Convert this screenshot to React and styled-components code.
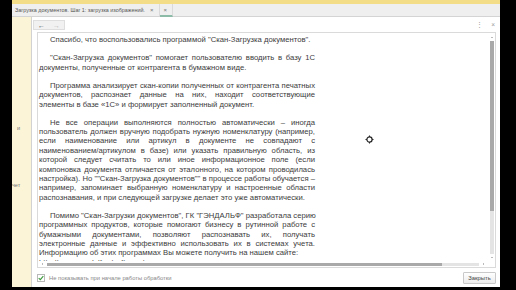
import styled, { createGlobalStyle } from "styled-components";

const GlobalStyle = createGlobalStyle`
  html, body {
    margin: 0;
    padding: 0;
    background: #000;
  }
  body {
    width: 516px;
    height: 290px;
    overflow: hidden;
    font-family: "Liberation Sans", Arial, sans-serif;
  }
`;

const Screen = styled.div`
  display: flex;
  box-sizing: border-box;
  width: 516px;
  height: 290px;
  padding: 0 16px 3px 12px;
  background: #000;
`;

const Main = styled.div`
  display: flex;
  flex-direction: column;
  flex: 1;
  background: #fff;
`;

const TopBand = styled.div`
  height: 4px;
  background: #f3dd88;
`;

const TabBar = styled.div`
  display: flex;
  align-items: stretch;
  height: 12px;
  background: #efefef;
  border-bottom: 1px solid #d4d4d4;
`;

const Tab = styled.div`
  display: flex;
  align-items: center;
  gap: 5px;
  padding: 0 ${(p) => (p.$narrow ? 5 : 6)}px 0 3px;
  border-right: 1px solid #dadada;
  border-bottom: ${(p) => (p.$active ? "2px solid #8cbba8" : "none")};
  margin-bottom: ${(p) => (p.$active ? "-1px" : "0")};
  font-size: 5.4px;
  color: #555;
  white-space: nowrap;
`;

const TabClose = styled.span`
  font-size: 6px;
  color: #777;
`;

const Body = styled.div`
  display: flex;
  flex: 1;
  min-height: 0;
`;

const SideStrip = styled.div`
  display: flex;
  flex-direction: column;
  width: 19px;
  background: #fbf4d6;
  border-right: 1px solid #d2d2d2;
`;

const SideLabel = styled.span`
  margin-top: ${(p) => p.$top}px;
  padding-left: ${(p) => p.$left}px;
  font-size: 5.5px;
  line-height: 6px;
  color: #777;
  white-space: nowrap;
  overflow: hidden;
`;

const Window = styled.div`
  display: flex;
  flex-direction: column;
  flex: 1;
  padding: 0 4px 0 1px;
  background: #fff;
`;

const Header = styled.div`
  display: flex;
  align-items: center;
  justify-content: space-between;
  height: 15px;
`;

const NavGroup = styled.div`
  display: flex;
  align-items: center;
  justify-content: space-around;
  width: 30px;
  height: 8px;
  margin-top: 1px;
  background: #f1f1f1;
  border: 1px solid #dedede;
`;

const NavArrow = styled.span`
  font-size: 7px;
  line-height: 7px;
  color: ${(p) => (p.$disabled ? "#b8b8b8" : "#555")};
`;

const Actions = styled.div`
  display: flex;
  gap: 8px;
  padding-right: 1px;
  font-size: 6.5px;
  color: #999;
`;

const TextBox = styled.div`
  position: relative;
  display: grid;
  grid-template-columns: 1fr 7px;
  grid-template-rows: 1fr 6px;
  flex: 1;
  min-height: 0;
  margin-left: 4px;
  border: 1px solid #dadada;
`;

const Content = styled.div`
  overflow: hidden;
  padding: 2.4px 0 0 1px;
  color: #3c3c3c;
  font-size: 7.7px;
  line-height: 9.4px;
`;

const Column = styled.div`
  width: 276px;
`;

const Para = styled.div`
  margin-bottom: 8.6px;
`;

const Line = styled.div`
  text-indent: ${(p) => (p.$first ? 11 : 0)}px;
  text-align: ${(p) => (p.$justify ? "justify" : "left")};
  text-align-last: ${(p) => (p.$justify ? "justify" : "auto")};
  white-space: nowrap;
`;

const VScroll = styled.div`
  display: flex;
  flex-direction: column;
  align-items: center;
  padding: 3px 0 2px;
`;

const HScroll = styled.div`
  display: flex;
  align-items: center;
  padding: 0 3px;
`;

const Track = styled.div`
  display: flex;
  flex: 1;
  flex-direction: ${(p) => (p.$vertical ? "column" : "row")};
  margin: ${(p) => (p.$vertical ? "3px 0" : "0 4px")};
  ${(p) => (p.$vertical ? "width: 4px;" : "height: 3px;")}
  background: #e4e4e4;
`;

const Thumb = styled.div`
  flex: none;
  ${(p) => (p.$vertical ? `height: ${p.$size}px;` : `width: ${p.$size}px;`)}
  background: #a9a9a9;
`;

const Arrow = styled.span`
  width: 0;
  height: 0;
  border: 1.5px solid transparent;
  ${(p) => `border-${p.$dir}-color: #777;`}
`;

const Corner = styled.div`
  background: #fff;
`;

const Cursor = styled.svg`
  position: absolute;
  left: 327px;
  top: 102px;
`;

const Footer = styled.div`
  display: flex;
  align-items: center;
  justify-content: space-between;
  height: 19px;
  padding-left: 4px;
`;

const CheckRow = styled.label`
  display: flex;
  align-items: center;
  gap: 4px;
  font-size: 5.8px;
  color: #888;
`;

const CheckBox = styled.span`
  display: flex;
  align-items: center;
  justify-content: center;
  box-sizing: border-box;
  width: 8px;
  height: 8px;
  border: 1px solid #b9b9b9;
  background: #fff;
`;

const CloseButton = styled.button`
  box-sizing: border-box;
  width: 33px;
  height: 12px;
  margin: 0;
  padding: 0;
  border: 1px solid #c9c9c9;
  border-radius: 1px;
  background: linear-gradient(#ffffff, #ececec);
  font-family: inherit;
  font-size: 5.8px;
  color: #444;
`;

const paragraphs = [
  {
    lines: ['Спасибо, что воспользовались программой "Скан-Загрузка документов".'],
    justifyLast: false,
  },
  {
    lines: [
      '"Скан-Загрузка документов" помогает пользователю вводить в базу 1С',
      "документы, полученные от контрагента в бумажном виде.",
    ],
  },
  {
    lines: [
      "Программа анализирует скан-копии полученных от контрагента печатных",
      "документов, распознает данные на них, находит соответствующие",
      "элементы в базе «1С» и формирует заполненный документ.",
    ],
  },
  {
    lines: [
      "Не все операции выполняются полностью автоматически – иногда",
      "пользователь должен вручную подобрать нужную номенклатуру (например,",
      "если наименование или артикул в документе не совпадают с",
      "наименованием/артикулом в базе) или указать правильную область, из",
      "которой следует считать то или иное информационное поле (если",
      "компоновка документа отличается от эталонного, на котором проводилась",
      'настройка). Но ""Скан-Загрузка документов"" в процессе работы обучается –',
      "например, запоминает выбранную номенклатуру и настроенные области",
      "распознавания, и при следующей загрузке делает это уже автоматически.",
    ],
  },
  {
    lines: [
      'Помимо "Скан-Загрузки документов", ГК "ГЭНДАЛЬФ" разработала серию',
      "программных продуктов, которые помогают бизнесу в рутинной работе с",
      "бумажными документами, позволяют распознавать их, получать",
      "электронные данные и эффективно использовать их в системах учета.",
    ],
    tail: [
      "Информацию об этих программах Вы можете получить на нашем сайте:",
      "http://www.gendalf.ru/software/",
    ],
  },
];

function Paragraph({ lines, tail = [] }) {
  const last = tail.length ? -1 : lines.length - 1;
  return (
    <Para>
      {lines.map((text, i) => (
        <Line key={i} $first={i === 0} $justify={lines.length > 1 && i !== last}>
          {text}
        </Line>
      ))}
      {tail.map((text, i) => (
        <Line key={"t" + i}>{text}</Line>
      ))}
    </Para>
  );
}

function App() {
  return (
    <>
      <GlobalStyle />
      <Screen>
        <Main>
          <TopBand />
          <TabBar>
            <Tab>
              Загрузка документов. Шаг 1: загрузка изображений.
              <TabClose>×</TabClose>
            </Tab>
            <Tab $active $narrow>
              <TabClose>×</TabClose>
            </Tab>
          </TabBar>
          <Body>
            <SideStrip>
              <SideLabel $top={108} $left={5}>
                и
              </SideLabel>
              <SideLabel $top={51} $left={0}>
                чет
              </SideLabel>
            </SideStrip>
            <Window>
              <Header>
                <NavGroup>
                  <NavArrow>←</NavArrow>
                  <NavArrow $disabled>→</NavArrow>
                </NavGroup>
                <Actions>
                  <span>⋮</span>
                  <span>×</span>
                </Actions>
              </Header>
              <TextBox>
                <Content>
                  <Column>
                    {paragraphs.map((p, i) => (
                      <Paragraph key={i} lines={p.lines} tail={p.tail} />
                    ))}
                  </Column>
                </Content>
                <VScroll>
                  <Arrow $dir="bottom" />
                  <Track $vertical>
                    <Thumb $vertical $size={170} />
                  </Track>
                  <Arrow $dir="top" />
                </VScroll>
                <HScroll>
                  <Arrow $dir="right" />
                  <Track>
                    <Thumb $size={395} />
                  </Track>
                  <Arrow $dir="left" />
                </HScroll>
                <Corner />
                <Cursor width="9" height="9" viewBox="0 0 9 9">
                  <circle cx="4.5" cy="4.5" r="2.6" fill="#fff" stroke="#222" strokeWidth="1.2" />
                  <path d="M4.5 0.5v1.4M4.5 7.1v1.4M0.5 4.5h1.4M7.1 4.5h1.4" stroke="#222" strokeWidth="1" />
                </Cursor>
              </TextBox>
              <Footer>
                <CheckRow>
                  <CheckBox>
                    <svg width="7" height="6" viewBox="0 0 7 6">
                      <path d="M0.8 3.2 L2.7 5 L6.2 0.8" fill="none" stroke="#3d9a3d" strokeWidth="1.3" />
                    </svg>
                  </CheckBox>
                  Не показывать при начале работы обработки
                </CheckRow>
                <CloseButton>Закрыть</CloseButton>
              </Footer>
            </Window>
          </Body>
        </Main>
      </Screen>
    </>
  );
}

export default App;
